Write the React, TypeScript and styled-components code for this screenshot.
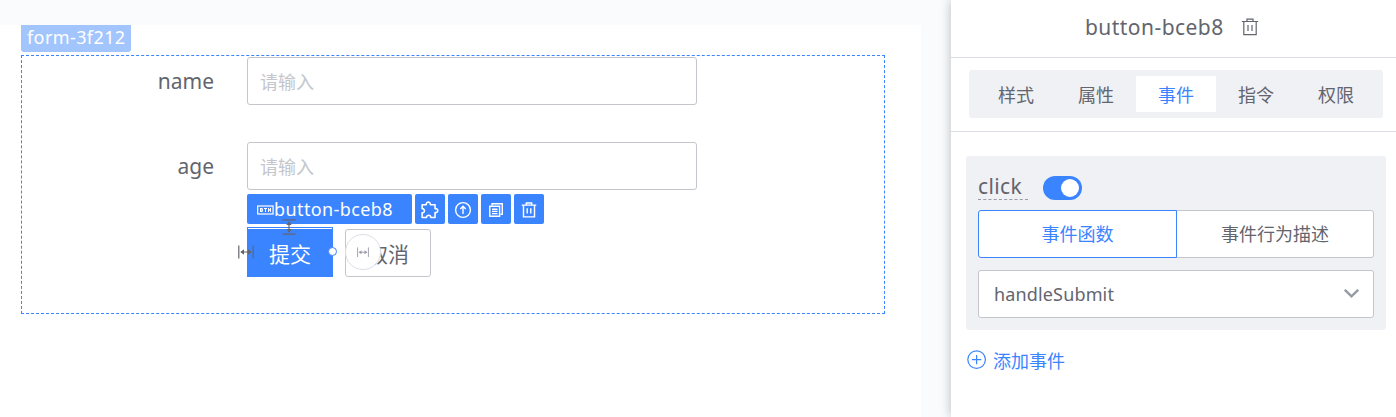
import React from "react";
import styled, { createGlobalStyle, css } from "styled-components";

const BLUE = "#3a84ff";
const TEXT = "#63656e";
const BORDER = "#c4c6cc";
const PANEL = "#f0f1f5";

const GlobalStyle = createGlobalStyle`
  *, *::before, *::after { box-sizing: border-box; }
  body {
    margin: 0;
    background: #fafbfd;
    color: ${TEXT};
    font-family: "Noto Sans", "Noto Sans CJK SC", sans-serif;
    overflow: hidden;
  }
  button, input { font-family: inherit; }
  svg { display: block; flex: none; }
`;

const Page = styled.div`
  display: flex;
  justify-content: space-between;
  height: 417px;
`;

const Canvas = styled.main`
  width: 921px;
  margin-top: 25px;
  padding-left: 21px;
  background: #fff;
`;

const FormTag = styled.div`
  width: 110px;
  height: 27px;
  margin-bottom: 3px;
  padding-left: 6px;
  border-radius: 0 0 3px 3px;
  background: #a3c5fd;
  color: #fff;
  font-size: 18px;
  letter-spacing: 0.4px;
  line-height: 25px;
  white-space: nowrap;
`;

const FormBox = styled.form`
  width: 864px;
  height: 259px;
  padding-top: 1px;
  border: 1px dashed ${BLUE};
`;

const FormRow = styled.div<{ $gap: number }>`
  display: flex;
  align-items: center;
  height: 48px;
  margin-bottom: ${(p) => p.$gap}px;
`;

const Label = styled.label`
  width: 192px;
  margin-right: 33px;
  text-align: right;
  font-size: 21px;
  line-height: 48px;
`;

const Input = styled.input`
  width: 450px;
  height: 48px;
  padding: 2px 12px 0;
  border: 1px solid ${BORDER};
  border-radius: 3px;
  background: #fff;
  font-size: 18px;
  &::placeholder { color: #c4c6cc; opacity: 1; }
`;

const Actions = styled.div`
  position: relative;
  display: flex;
  gap: 12px;
  margin-left: 225px;
`;

const ActionButton = styled.button<{ $primary?: boolean }>`
  position: relative;
  width: 86px;
  height: 48px;
  padding: 0;
  border: 1px solid ${BORDER};
  border-radius: 3px;
  background: #fff;
  color: ${TEXT};
  font-size: 21px;
  ${(p) =>
    p.$primary &&
    css`
      border-color: ${BLUE};
      border-radius: 0;
      background: ${BLUE};
      color: #fff;
      box-shadow: 0 -2px 0 ${BLUE};
      &::before {
        content: "";
        position: absolute;
        top: -2px;
        left: 0;
        right: 0;
        height: 1px;
        background: #fff;
      }
    `}
`;

const Toolbar = styled.div`
  position: absolute;
  top: -35px;
  left: 0;
  display: flex;
  gap: 3px;
`;

const ToolItem = styled.div<{ $wide?: boolean }>`
  display: flex;
  align-items: center;
  justify-content: ${(p) => (p.$wide ? "flex-start" : "center")};
  width: ${(p) => (p.$wide ? 165 : 30)}px;
  height: 30px;
  padding-left: ${(p) => (p.$wide ? 10 : 0)}px;
  padding-top: 2px;
  border-radius: 2px;
  background: ${BLUE};
  color: #fff;
  font-size: 18px;
  letter-spacing: 0.4px;
`;

const ToolText = styled.span`
  height: 30px;
  line-height: 28px;
`;

const SpacingMark = styled.span<{ $x: number; $y: number }>`
  position: absolute;
  left: ${(p) => p.$x}px;
  top: ${(p) => p.$y}px;
  color: ${TEXT};
`;

const DragDot = styled.span`
  position: absolute;
  left: 81px;
  top: 18px;
  width: 9px;
  height: 9px;
  border: 1px solid ${BLUE};
  border-radius: 50%;
  background: #fff;
`;

const GapHandle = styled.span`
  position: absolute;
  left: 98px;
  top: 5px;
  display: flex;
  align-items: center;
  justify-content: center;
  width: 36px;
  height: 36px;
  border: 1px solid #dcdee5;
  border-radius: 50%;
  background: #fff;
  color: #979ba5;
`;

const Sidebar = styled.aside`
  position: relative;
  width: 445px;
  background: #fff;
  box-shadow: -1px 0 10px rgba(0, 0, 0, 0.22);
`;

const SideHeader = styled.header`
  display: flex;
  align-items: center;
  gap: 17px;
  height: 58px;
  padding: 0 0 4px 134px;
  border-bottom: 1px solid #dcdee5;
  font-size: 21px;
  letter-spacing: 0.45px;
`;

const TabsArea = styled.div`
  height: 74px;
  padding: 12px 13px 0 18px;
  border-bottom: 1px solid #dcdee5;
`;

const Tabs = styled.nav`
  display: flex;
  height: 48px;
  padding: 6px 7px;
  border-radius: 3px;
  background: ${PANEL};
`;

const Tab = styled.div<{ $active?: boolean }>`
  flex: 1;
  height: 36px;
  text-align: center;
  font-size: 18px;
  line-height: 38px;
  color: ${(p) => (p.$active ? BLUE : TEXT)};
  background: ${(p) => (p.$active ? "#fff" : "transparent")};
`;

const EventCard = styled.section`
  height: 174px;
  margin: 24px 10px 0 15px;
  padding: 15px 12px 12px;
  border-radius: 3px;
  background: ${PANEL};
`;

const EventHead = styled.div`
  display: flex;
  align-items: flex-start;
  gap: 15px;
  height: 39px;
`;

const EventName = styled.span`
  width: 50px;
  height: 29px;
  border-bottom: 1px dashed #979ba5;
  font-size: 21px;
  letter-spacing: 0.4px;
  line-height: 31px;
`;

const Switch = styled.span`
  display: flex;
  justify-content: flex-end;
  width: 39px;
  height: 24px;
  margin-top: 5px;
  padding: 3px;
  border-radius: 12px;
  background: ${BLUE};
  &::after {
    content: "";
    width: 18px;
    height: 18px;
    border-radius: 50%;
    background: #fff;
  }
`;

const Segments = styled.div`
  display: flex;
  margin-bottom: 12px;
`;

const Segment = styled.div<{ $active?: boolean }>`
  position: relative;
  width: ${(p) => (p.$active ? 199 : 198)}px;
  height: 48px;
  margin-left: ${(p) => (p.$active ? 0 : -1)}px;
  border: 1px solid ${(p) => (p.$active ? BLUE : BORDER)};
  border-radius: ${(p) => (p.$active ? "3px 0 0 3px" : "0 3px 3px 0")};
  background: #fff;
  color: ${(p) => (p.$active ? BLUE : TEXT)};
  z-index: ${(p) => (p.$active ? 1 : 0)};
  text-align: center;
  font-size: 18px;
  line-height: 46px;
`;

const Select = styled.div`
  display: flex;
  align-items: center;
  justify-content: space-between;
  height: 48px;
  padding: 0 14px 0 15px;
  border: 1px solid ${BORDER};
  border-radius: 3px;
  background: #fff;
  font-size: 18px;
  letter-spacing: 0.15px;
`;

const AddEvent = styled.div`
  display: flex;
  align-items: center;
  gap: 6px;
  height: 30px;
  margin: 15px 0 0 16px;
  color: ${BLUE};
  font-size: 18px;
`;

const iconProps = { fill: "none", stroke: "currentColor" };

const TrashIcon = ({ weight = 1.3, size = 18 }: { weight?: number; size?: number }) => (
  <svg width={size} height={size} viewBox="0 0 18 18" {...iconProps} strokeWidth={weight}>
    <path d="M.8 3.5h16.4M6 3.3V1.2h6v2.1M2.8 3.5v13.2h12.4V3.5M7 7v6M11 7v6" />
  </svg>
);

const BtnIcon = () => (
  <svg width="17" height="10" viewBox="0 0 17 10" {...iconProps} strokeWidth="1.2">
    <rect x=".7" y="1" width="15.4" height="8" />
    <path d="M3.5 3v4M3.5 3.5h1.8v3H3.5M3.5 5h2M7 3.5h3M8.5 3.5V7M11.5 7V3.3l2 3.2V3" strokeWidth="1" />
  </svg>
);

const PuzzleIcon = () => (
  <svg width="18" height="18" viewBox="1 1 16 16" {...iconProps} strokeWidth="1.4" strokeLinejoin="round">
    <path d="M2 4.3h3.7C5.3 1.2 9.7 1.2 9.3 4.3h4.2v3.5c3.2-.5 3.2 3.9 0 3.5v4.4H9.7c.3-2.7-4-2.7-3.8 0H2v-4.2c2.7.2 2.7-4 0-3.7z" />
  </svg>
);

const UpIcon = () => (
  <svg width="18" height="18" viewBox="0 0 18 18" {...iconProps} strokeWidth="1.4">
    <circle cx="9" cy="9" r="7.4" />
    <path d="M9 13V5.4M6.3 8 9 5.2 11.7 8" />
  </svg>
);

const CopyIcon = () => (
  <svg width="16" height="16" viewBox="0 0 16 16" {...iconProps} strokeWidth="1.4">
    <path d="M4 3.3V1.8h10.3v10.4h-1.7M1.8 4.3h9.8v10H1.8zM4 7.2h5.5M4 9.4h5.5M4 11.6h5.5" />
  </svg>
);

const WidthIcon = ({ size = 16 }: { size?: number }) => (
  <svg width={size} height={(size * 14) / 16} viewBox="0 0 16 14" {...iconProps} strokeWidth="1.2">
    <path d="M.8.5v13M15.2.5v13M3 7h10" />
    <path d="M2.3 7 6 4.3v5.4zM13.7 7 10 4.3v5.4z" fill="currentColor" stroke="none" />
  </svg>
);

const HeightIcon = () => (
  <svg width="14" height="16" viewBox="0 0 14 16" {...iconProps} strokeWidth="1.2">
    <path d="M.5.8h13M.5 15.2h13M7 3v10" />
    <path d="M7 2.3 4.3 6h5.4zM7 13.7 4.3 10h5.4z" fill="currentColor" stroke="none" />
  </svg>
);

const ChevronIcon = () => (
  <svg width="15" height="10" viewBox="0 0 15 10" {...iconProps} stroke="#979ba5" strokeWidth="2.4">
    <path d="M.8 .8 7.5 7.4l6.7-6.6" />
  </svg>
);

const PlusIcon = () => (
  <svg width="20" height="20" viewBox="0 0 20 20" {...iconProps} strokeWidth="1.2">
    <circle cx="9.6" cy="9.6" r="8.8" />
    <path d="M9.6 4.9v9.4M4.9 9.6h9.4" />
  </svg>
);

const TABS = ["样式", "属性", "事件", "指令", "权限"];

export default function App() {
  return (
    <>
      <GlobalStyle />
      <Page>
        <Canvas>
          <FormTag>form-3f212</FormTag>
          <FormBox>
            <FormRow $gap={37}>
              <Label>name</Label>
              <Input placeholder="请输入" />
            </FormRow>
            <FormRow $gap={39}>
              <Label>age</Label>
              <Input placeholder="请输入" />
            </FormRow>
            <Actions>
              <ActionButton type="button" $primary>提交</ActionButton>
              <ActionButton type="button">取消</ActionButton>
              <Toolbar>
                <ToolItem $wide><BtnIcon /><ToolText>button-bceb8</ToolText></ToolItem>
                <ToolItem><PuzzleIcon /></ToolItem>
                <ToolItem><UpIcon /></ToolItem>
                <ToolItem><CopyIcon /></ToolItem>
                <ToolItem><TrashIcon weight={1.6} size={16} /></ToolItem>
              </Toolbar>
              <SpacingMark $x={35} $y={-10}><HeightIcon /></SpacingMark>
              <SpacingMark $x={-9} $y={16}><WidthIcon /></SpacingMark>
              <DragDot />
              <GapHandle><WidthIcon size={12} /></GapHandle>
            </Actions>
          </FormBox>
        </Canvas>
        <Sidebar>
          <SideHeader>button-bceb8<TrashIcon weight={1.2} /></SideHeader>
          <TabsArea>
            <Tabs>
              {TABS.map((name) => (
                <Tab key={name} $active={name === "事件"}>{name}</Tab>
              ))}
            </Tabs>
          </TabsArea>
          <EventCard>
            <EventHead>
              <EventName>click</EventName>
              <Switch />
            </EventHead>
            <Segments>
              <Segment $active>事件函数</Segment>
              <Segment>事件行为描述</Segment>
            </Segments>
            <Select>handleSubmit<ChevronIcon /></Select>
          </EventCard>
          <AddEvent><PlusIcon />添加事件</AddEvent>
        </Sidebar>
      </Page>
    </>
  );
}
